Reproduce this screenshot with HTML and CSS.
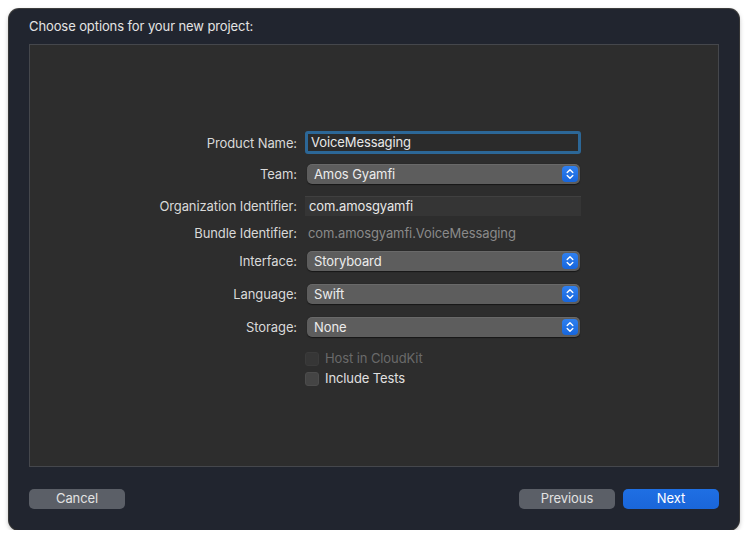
FILE: index.html
```html
<!DOCTYPE html>
<html>
<head>
<meta charset="utf-8">
<link rel="stylesheet" href="styles.css">
</head>
<body>
<div class="window">
  <div class="title">Choose options for your new project:</div>
  <div class="panel">
    <div class="row r1">
      <div class="label">Product Name:</div>
      <div class="field focus">VoiceMessaging</div>
    </div>
    <div class="row r2">
      <div class="label">Team:</div>
      <div class="popup"><span>Amos Gyamfi</span><span class="stepper"><svg width="8" height="12" viewBox="0 0 8 12"><path d="M1.2 4.6 L4 1.8 L6.8 4.6 M1.2 7.4 L4 10.2 L6.8 7.4" fill="none" stroke="#fff" stroke-width="1.4" stroke-linecap="round" stroke-linejoin="round"/></svg></span></div>
    </div>
    <div class="row r3">
      <div class="label">Organization Identifier:</div>
      <div class="field plain">com.amosgyamfi</div>
    </div>
    <div class="row r4">
      <div class="label">Bundle Identifier:</div>
      <div class="static">com.amosgyamfi.VoiceMessaging</div>
    </div>
    <div class="row r5">
      <div class="label">Interface:</div>
      <div class="popup"><span>Storyboard</span><span class="stepper"><svg width="8" height="12" viewBox="0 0 8 12"><path d="M1.2 4.6 L4 1.8 L6.8 4.6 M1.2 7.4 L4 10.2 L6.8 7.4" fill="none" stroke="#fff" stroke-width="1.4" stroke-linecap="round" stroke-linejoin="round"/></svg></span></div>
    </div>
    <div class="row r6">
      <div class="label">Language:</div>
      <div class="popup"><span>Swift</span><span class="stepper"><svg width="8" height="12" viewBox="0 0 8 12"><path d="M1.2 4.6 L4 1.8 L6.8 4.6 M1.2 7.4 L4 10.2 L6.8 7.4" fill="none" stroke="#fff" stroke-width="1.4" stroke-linecap="round" stroke-linejoin="round"/></svg></span></div>
    </div>
    <div class="row r7">
      <div class="label">Storage:</div>
      <div class="popup"><span>None</span><span class="stepper"><svg width="8" height="12" viewBox="0 0 8 12"><path d="M1.2 4.6 L4 1.8 L6.8 4.6 M1.2 7.4 L4 10.2 L6.8 7.4" fill="none" stroke="#fff" stroke-width="1.4" stroke-linecap="round" stroke-linejoin="round"/></svg></span></div>
    </div>
    <div class="row r8">
      <div class="label"></div>
      <div class="check disabled"><span class="box"></span><span>Host in CloudKit</span></div>
    </div>
    <div class="row r9">
      <div class="label"></div>
      <div class="check"><span class="box"></span><span>Include Tests</span></div>
    </div>
  </div>
  <div class="footer">
    <div class="btn gray">Cancel</div>
    <div class="right">
      <div class="btn gray">Previous</div>
      <div class="btn blue">Next</div>
    </div>
  </div>
</div>
</body>
</html>
```
FILE: styles.css
```css
html, body {
  margin: 0;
  padding: 0;
  background: #ffffff;
}
body {
  font-family: "Inter", "Liberation Sans", sans-serif;
  font-size: 13px;
  letter-spacing: -0.1px;
  color: #dedede;
}
.window {
  margin: 9px 0 0 9px;
  width: 730px;
  height: 521px;
  box-sizing: border-box;
  background: #21252f;
  border-radius: 10px;
  box-shadow: 0 0 0 1px rgba(0,0,0,0.75), 0 2px 5px rgba(0,0,0,0.35);
  padding: 0 20px;
  display: flex;
  flex-direction: column;
}
.title {
  padding-top: 9px;
  line-height: 16px;
  height: 16px;
  margin-bottom: 10px;
  color: #e4e4e4;
}
.panel {
  height: 423px;
  box-sizing: border-box;
  background: #2d2d2d;
  border: 1px solid #45474c;
  padding-top: 86px;
  display: flex;
  flex-direction: column;
}
.row {
  display: grid;
  grid-template-columns: 267px 276px;
  column-gap: 8px;
  align-items: center;
  line-height: 16px;
}
.r1 { height: 23px; }
.r2 { height: 20px; margin-top: 10px; }
.r3 { height: 20px; margin-top: 12px; }
.r4 { height: 18px; margin-top: 8px; }
.r5 { height: 20px; margin-top: 9px; }
.r6 { height: 20px; margin-top: 13px; }
.r7 { height: 20px; margin-top: 13px; }
.r8 { height: 14px; margin-top: 14px; }
.r9 { height: 14px; margin-top: 6px; }
.label {
  text-align: right;
  color: #d9d9d9;
  white-space: nowrap;
}
.field {
  box-sizing: border-box;
  white-space: nowrap;
  color: #e8e8e8;
}
.field.focus {
  height: 23px;
  border: 3px solid #2c6797;
  border-radius: 3px;
  background: #2b2b2b;
  padding-left: 3px;
  line-height: 17px;
}
.field.plain {
  height: 20px;
  background: #353535;
  border-top: 1px solid #404040;
  padding-left: 4px;
  line-height: 18px;
}
.static {
  color: #8a8a8a;
  padding-left: 3px;
  white-space: nowrap;
}
.popup {
  height: 20px;
  margin: 0 1px 0 2px;
  box-sizing: border-box;
  background: #5d5d5d;
  border-radius: 5px;
  box-shadow: inset 0 1px 0 rgba(255,255,255,0.08), 0 0.5px 1px rgba(0,0,0,0.5);
  display: flex;
  align-items: center;
  justify-content: space-between;
  padding: 0 2px 0 7px;
  color: #ececec;
}
.popup > span:first-child {
  margin-top: -1px;
}
.stepper {
  width: 16px;
  height: 16px;
  border-radius: 4px;
  background: linear-gradient(#2f80f0, #1766dc);
  display: flex;
  align-items: center;
  justify-content: center;
}
.check {
  display: flex;
  align-items: center;
  gap: 6px;
  color: #e0e0e0;
}
.check > span:last-child {
  margin-top: -1px;
}
.check .box {
  width: 14px;
  height: 14px;
  box-sizing: border-box;
  border-radius: 3px;
  background: #444444;
  border: 1px solid #4c4c4c;
}
.check.disabled { color: #6a6a6a; }
.check.disabled .box {
  background: #363636;
  border-color: #3b3b3b;
}
.footer {
  margin-top: 22px;
  display: flex;
  justify-content: space-between;
}
.right {
  display: flex;
  gap: 8px;
}
.btn {
  width: 96px;
  height: 20px;
  border-radius: 5px;
  text-align: center;
  line-height: 19px;
  font-size: 13px;
}
.btn.gray {
  background: #5b5f67;
  color: #e2e2e2;
}
.btn.blue {
  background: linear-gradient(#1f6fe3, #1a66d9);
  color: #ffffff;
}
```
